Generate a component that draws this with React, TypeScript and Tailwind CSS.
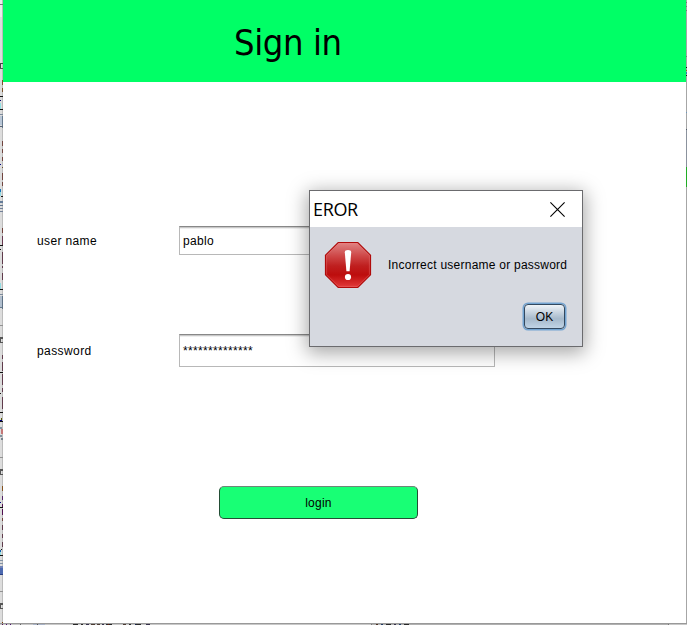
import React from "react";

type Mark = [x: number, y: number, w: number, h: number, color: string];

const desktopMarks: Mark[] = [
  [0, 0, 2, 17, "#ececec"], [0, 4, 3, 1, "#777777"],
  [0, 63, 3, 1, "#484848"], [0, 64, 1, 4, "#484848"], [0, 68, 3, 1, "#555555"],
  [2, 80, 1, 5, "#80502a"], [2, 88, 1, 4, "#795029"],
  [0, 96, 3, 1, "#101010"], [0, 100, 1, 1, "#000070"], [0, 103, 1, 6, "#91e2e4"], [0, 109, 3, 1, "#101010"],
  [0, 114, 3, 1, "#7b899b"], [0, 116, 2, 9, "#b9c7d7"], [2, 116, 1, 12, "#66798c"], [0, 126, 3, 1, "#586475"],
  [2, 141, 1, 5, "#71443f"], [2, 149, 1, 4, "#71443f"], [2, 157, 1, 4, "#71443f"], [0, 164, 1, 1, "#000080"],
  [2, 167, 1, 1, "#70502f"], [2, 173, 1, 7, "#71443f"], [2, 182, 1, 4, "#71443f"],
  [0, 189, 1, 3, "#1473b9"], [0, 192, 1, 4, "#91dce2"], [1, 196, 2, 1, "#101010"],
  [0, 201, 3, 2, "#657c99"], [0, 205, 3, 1, "#60738b"], [0, 208, 3, 1, "#718098"], [0, 211, 3, 1, "#718098"],
  [2, 228, 1, 5, "#70413a"], [2, 236, 1, 9, "#673950"], [0, 245, 3, 1, "#101010"], [0, 249, 1, 1, "#101010"],
  [2, 252, 1, 12, "#603b4c"], [2, 266, 1, 2, "#603b4c"], [2, 273, 1, 7, "#603b4c"],
  [0, 283, 1, 6, "#91dce2"], [0, 289, 3, 1, "#101010"], [0, 294, 3, 1, "#7b899b"],
  [0, 296, 2, 12, "#b1bfce"], [2, 296, 1, 13, "#5f7184"], [0, 307, 2, 1, "#66798c"],
  [0, 325, 3, 1, "#929292"], [0, 337, 3, 2, "#555555"], [0, 339, 1, 4, "#555555"], [0, 342, 3, 1, "#555555"],
  [2, 355, 1, 4, "#603b4c"], [2, 362, 1, 9, "#603b4c"], [0, 372, 3, 1, "#101010"],
  [2, 374, 1, 11, "#603b4c"], [0, 393, 1, 1, "#101010"], [2, 388, 1, 4, "#603b4c"], [2, 397, 1, 12, "#603b4c"],
  [0, 412, 3, 1, "#101010"], [1, 418, 1, 2, "#555500"], [0, 420, 2, 1, "#000080"], [0, 421, 3, 1, "#101010"],
  [0, 427, 2, 2, "#8292a0"], [1, 429, 2, 5, "#c47777"], [0, 435, 2, 2, "#8292a0"], [1, 438, 2, 2, "#75818c"],
  [0, 457, 3, 1, "#929292"], [0, 469, 3, 2, "#555555"], [0, 471, 1, 3, "#555555"], [0, 474, 3, 1, "#555555"],
  [2, 486, 1, 5, "#84511d"], [2, 496, 1, 4, "#542366"], [0, 502, 1, 1, "#000080"], [2, 504, 1, 3, "#501050"],
  [0, 507, 3, 1, "#101010"], [2, 509, 1, 6, "#501050"], [2, 518, 1, 3, "#70413a"],
  [2, 525, 1, 5, "#603b4c"], [2, 534, 1, 4, "#603b4c"], [2, 542, 1, 5, "#603b4c"],
  [1, 549, 1, 1, "#101010"], [0, 550, 1, 2, "#1060b0"], [0, 552, 1, 3, "#91e2e4"], [0, 555, 3, 1, "#101010"],
  [0, 560, 3, 1, "#8392a5"], [0, 563, 3, 1, "#8392a5"], [0, 566, 3, 2, "#7083b7"], [0, 568, 3, 6, "#4c69af"],
  [0, 574, 3, 1, "#283e80"], [0, 591, 3, 1, "#929292"], [0, 603, 3, 2, "#555555"],
  [0, 605, 1, 3, "#555555"], [0, 608, 3, 1, "#555555"], [2, 622, 1, 3, "#733900"],
];

const rightMarks: Mark[] = [
  [0, 2, 1, 1, "#777777"], [0, 6, 1, 1, "#777777"], [0, 10, 1, 1, "#777777"], [0, 56, 1, 1, "#777777"],
  [0, 67, 1, 1, "#111111"], [0, 70, 1, 1, "#a05a20"], [0, 72, 1, 2, "#327eab"], [0, 75, 1, 1, "#111111"],
  [0, 112, 1, 1, "#6c98bd"], [0, 129, 1, 1, "#4e5868"], [0, 130, 1, 37, "#8b929d"], [0, 167, 1, 20, "#20ad24"],
];

const bottomMarks: Mark[] = [
  [2, 1, 1, 1, "#501050"], [6, 1, 1, 1, "#501070"], [10, 1, 1, 1, "#501070"], [20, 1, 1, 1, "#666666"],
  [33, 1, 12, 1, "#a8b2c6"], [37, 1, 1, 1, "#555555"],
  [73, 1, 5, 1, "#282828"], [81, 1, 2, 1, "#282828"], [86, 1, 3, 1, "#35304a"], [91, 1, 4, 1, "#4b3b32"],
  [97, 1, 3, 1, "#4b3b32"], [102, 1, 2, 1, "#35304a"], [106, 1, 6, 1, "#282828"], [108, 1, 1, 1, "#702010"],
  [123, 1, 3, 1, "#4b3b32"], [129, 1, 2, 1, "#282828"], [135, 1, 6, 1, "#282828"], [135, 1, 1, 1, "#112255"],
  [146, 1, 4, 1, "#35304a"], [371, 1, 298, 1, "#b0b0b0"], [371, 1, 1, 1, "#777777"], [668, 1, 1, 1, "#777777"],
  [376, 1, 2, 1, "#4b3022"], [381, 1, 2, 1, "#203b66"], [386, 1, 5, 1, "#282828"], [394, 1, 2, 1, "#35304a"],
  [399, 1, 2, 1, "#203b66"], [404, 1, 5, 1, "#282828"],
];

function Marks({ items, width, height }: { items: Mark[]; width: number; height: number }) {
  return (
    <svg width={width} height={height} shapeRendering="crispEdges" className="block shrink-0" aria-hidden="true">
      {items.map(([x, y, w, h, color], i) => (
        <rect key={i} x={x} y={y} width={w} height={h} fill={color} />
      ))}
    </svg>
  );
}

function ErrorIcon() {
  return (
    <svg width="48" height="48" viewBox="0 0 48 48" className="block shrink-0" aria-hidden="true">
      <defs>
        <linearGradient id="errorFill" x1="0" y1="0" x2="0" y2="1">
          <stop offset="0" stopColor="#e08585" />
          <stop offset="0.3" stopColor="#ce4747" />
          <stop offset="0.52" stopColor="#bf1f1f" />
          <stop offset="0.72" stopColor="#bd0d0d" />
          <stop offset="1" stopColor="#e33a3a" />
        </linearGradient>
      </defs>
      <path d="M14.2 1.5H33.8L46.5 14.2V33.8L33.8 46.5H14.2L1.5 33.8V14.2Z" fill="url(#errorFill)" stroke="#b00b0b" strokeWidth="1.2" />
      <path d="M14.6 2.6H33.4L45.4 14.6V33.4L33.4 45.4H14.6L2.6 33.4V14.6Z" fill="none" stroke="#f08080" strokeOpacity="0.45" strokeWidth="0.8" />
      <path d="M20.8 11.3Q20.8 9 24 9T27.2 11.3L25.6 30.2H22.4Z" fill="#fff" />
      <circle cx="24" cy="36" r="3.1" fill="#fff" />
    </svg>
  );
}

function Field({ children, className }: { children: React.ReactNode; className: string }) {
  return (
    <div className={`w-[316px] border border-[#b8b8b8] border-t-[#888888] bg-white pl-[3px] shadow-[inset_0_1px_0_#c8c8c8,inset_0_2px_0_#eeeeee] ${className}`}>
      {children}
    </div>
  );
}

function ErrorDialog() {
  return (
    <div role="alertdialog" className="absolute top-[190px] left-[309px] flex h-[157px] w-[274px] flex-col border border-[#6b6b6e] bg-[#d6d9e0] shadow-[0_4px_18px_2px_rgba(0,0,0,0.35)]">
      <div className="flex h-9 shrink-0 items-center justify-between bg-white pr-[17px] pl-[3px]">
        <span className="font-['Open_Sans',sans-serif] text-[18px] leading-9 tracking-[-0.35px]">EROR</span>
        <svg width="15" height="15" viewBox="0 0 15 15" className="block" aria-label="Close">
          <path d="M0.4 0.4L14.6 14.6M14.6 0.4L0.4 14.6" stroke="#000" strokeWidth="1.1" />
        </svg>
      </div>
      <div className="flex pt-[14px] pl-[14px]">
        <ErrorIcon />
        <span className="mt-4 ml-4 text-[12px] leading-4 tracking-[0.24px] whitespace-nowrap">Incorrect username or password</span>
      </div>
      <div className="flex justify-end pt-[15px] pr-[17px]">
        <button className="h-[25px] w-[41px] rounded-[4px] border border-[#32485f] bg-linear-to-b from-[#f0f4f8] via-[#a6b9cb] via-60% to-[#c0d4e6] pt-[2px] text-[12px] leading-[21px] shadow-[0_0_0_1.5px_#73a4d1]">
          OK
        </button>
      </div>
    </div>
  );
}

export default function App() {
  return (
    <div className="relative flex h-[625px] w-[687px] flex-col overflow-hidden bg-[#d6d6d6] font-['Liberation_Sans',Arial,sans-serif] text-black">
      <div className="flex h-[623px]">
        <div className="h-full w-[3px] shrink-0 bg-linear-to-r from-[#dddddd] from-60% to-[#a4a4a4]">
          <Marks items={desktopMarks} width={3} height={623} />
        </div>
        <main className="flex w-[683px] flex-col bg-white">
          <header className="flex h-[82px] shrink-0 bg-[#00ff66] pl-[231px]">
            <h1 className="mt-[18px] font-['DejaVu_Sans_Condensed','DejaVu_Sans',sans-serif] text-[36px] leading-[50px] tracking-[-0.4px] whitespace-nowrap">Sign in</h1>
          </header>
          <div className="mt-36 flex h-[29px] items-center pl-[34px] text-[12px]">
            <span className="w-[142px] tracking-[0.36px]">user name</span>
            <Field className="h-[29px] leading-[28px] tracking-[0.3px]">pablo</Field>
          </div>
          <div className="mt-[79px] flex h-[33px] items-center pl-[34px] text-[12px]">
            <span className="w-[142px] tracking-[0.42px]">password</span>
            <Field className="h-[33px] leading-[32px] tracking-[0.33px]">**************</Field>
          </div>
          <button className="mt-[119px] ml-[216px] h-[33px] w-[199px] rounded-[5px] border border-[#234d35] border-t-[#6f8577] bg-[#18ff75] pt-[2px] text-[12px] leading-[29px] tracking-[0.25px]">
            login
          </button>
        </main>
        <div className="w-px bg-[#a6a6a6]">
          <Marks items={rightMarks} width={1} height={623} />
        </div>
      </div>
      <div className="h-[2px] bg-linear-to-b from-[#999999] from-50% to-[#c8c8c8] to-50%">
        <Marks items={bottomMarks} width={687} height={2} />
      </div>
      <ErrorDialog />
    </div>
  );
}
